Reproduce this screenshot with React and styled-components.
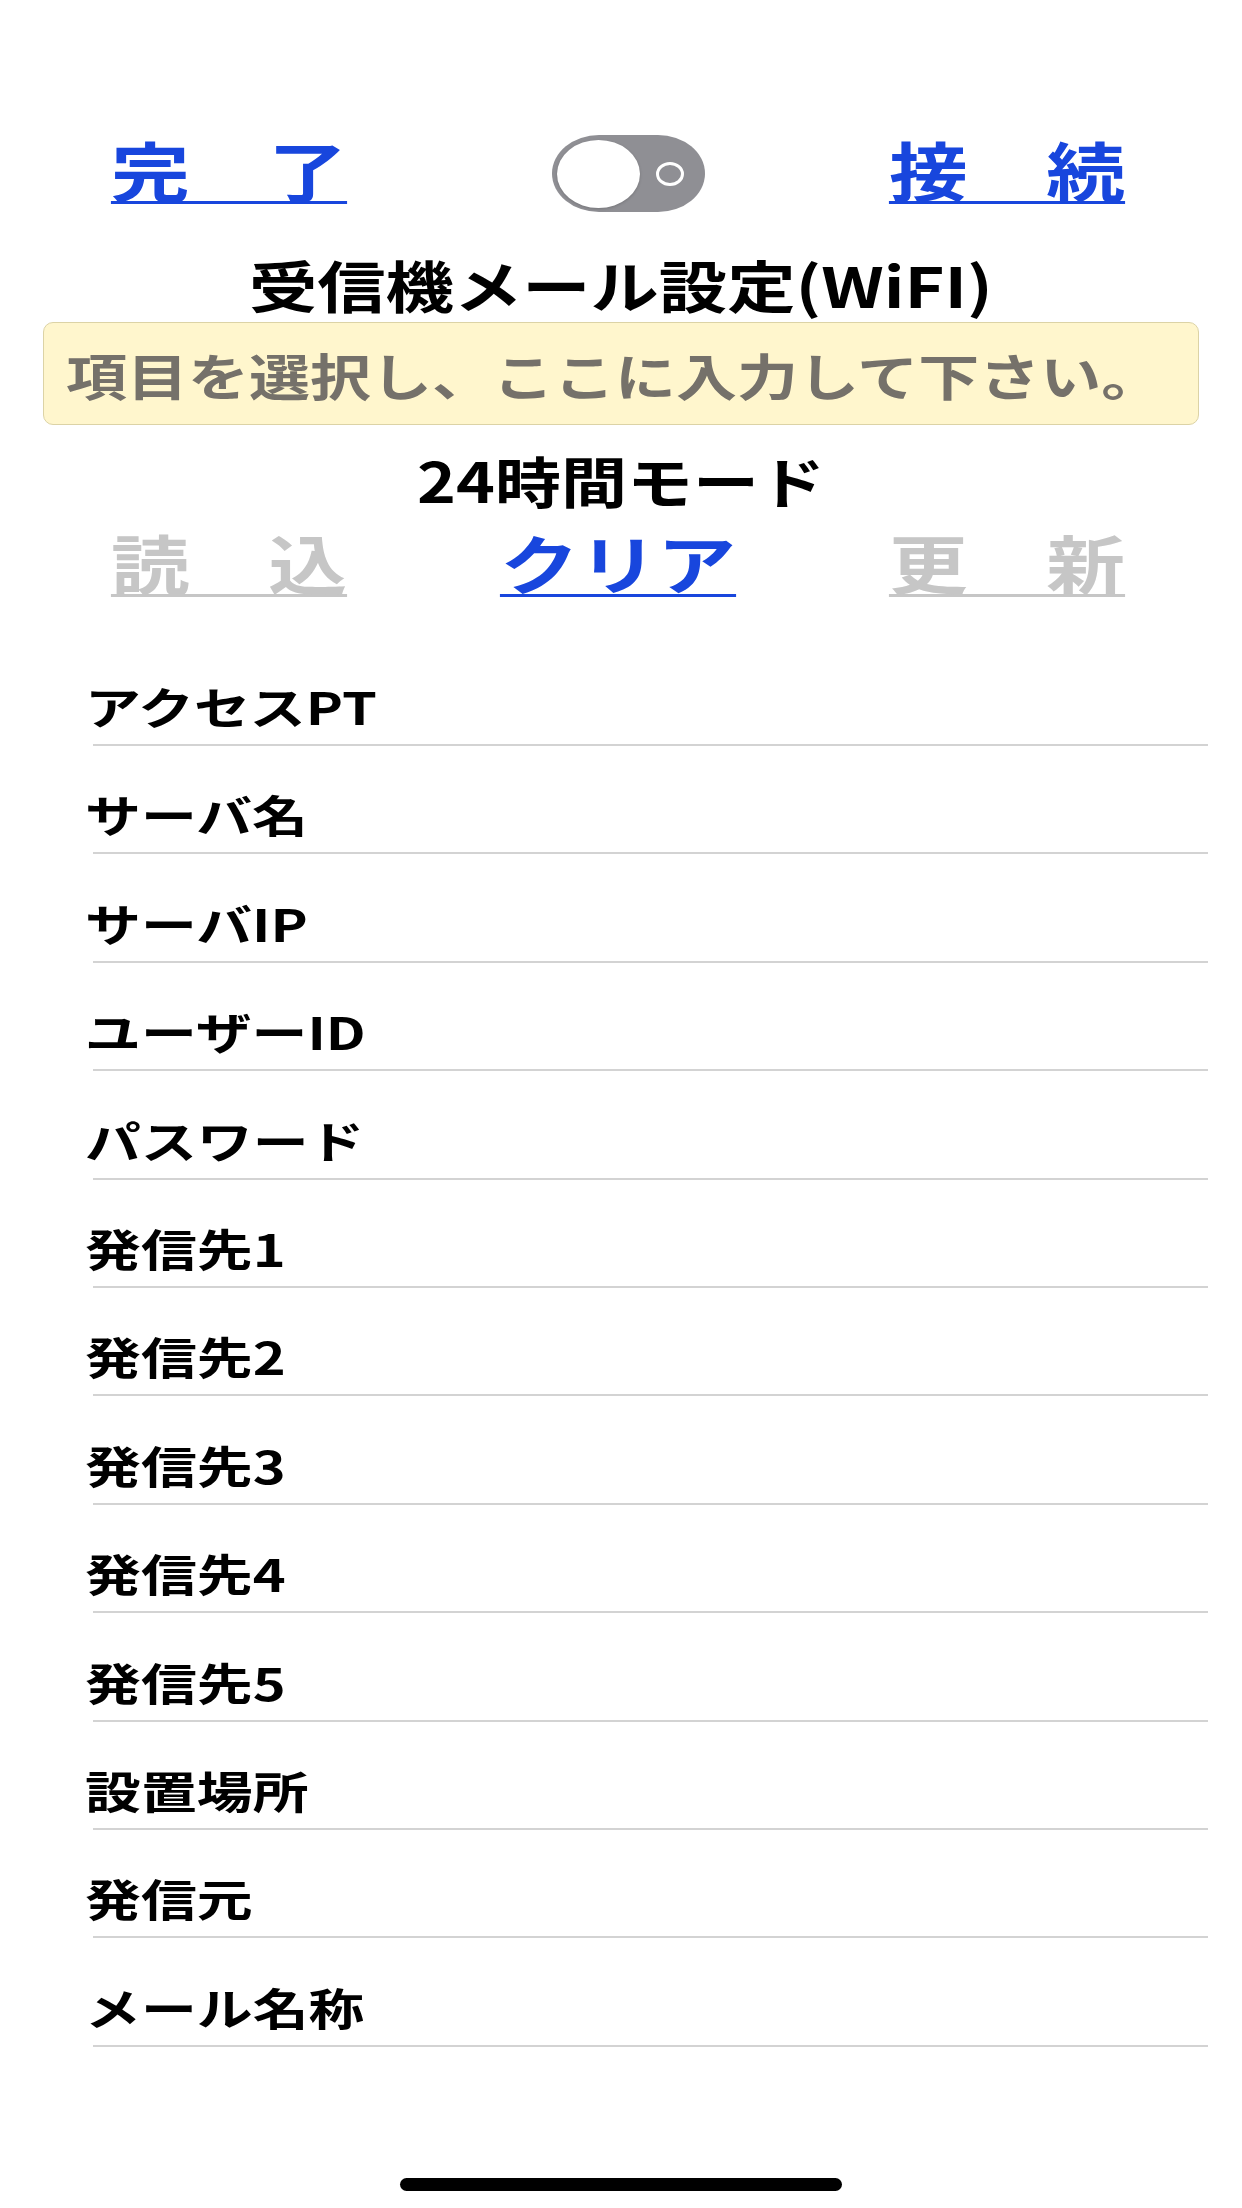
import React from "react";
import styled, { createGlobalStyle } from "styled-components";

const Global = createGlobalStyle`
  html, body { margin: 0; padding: 0; background: #ffffff; }
  body { font-family: "Noto Sans CJK JP", "Noto Sans", sans-serif; }
`;

const Page = styled.div`
  width: 1242px;
  min-height: 2208px;
  box-sizing: border-box;
  padding-top: 135px;
  display: flex;
  flex-direction: column;
  background: #ffffff;
  overflow: hidden;
  font-family: "Noto Sans CJK JP", "Noto Sans", sans-serif;
`;

const Header = styled.div`
  padding: 0 43px;
  display: flex;
  flex-direction: column;
`;

const ButtonRow = styled.div`
  display: grid;
  grid-template-columns: repeat(3, 1fr);
  align-items: center;
  justify-items: center;
  min-height: ${(p) => p.$h || 0}px;
  margin: ${(p) => p.$mt || 0}px -2px 0 -8px;
`;

const LinkButton = styled.span`
  display: inline-block;
  font-size: 64px;
  line-height: 64px;
  font-weight: 700;
  color: ${(p) => (p.$disabled ? "#c6c6c6" : "#1846dd")};
  padding-bottom: 1.5px;
  border-bottom: 3px solid currentColor;
  margin-bottom: ${(p) => p.$raise || 0}px;
  transform: scaleX(1.23);
  white-space: nowrap;
  cursor: pointer;
`;

const Track = styled.div`
  width: 153px;
  height: 77px;
  box-sizing: border-box;
  margin-left: 22px;
  border-radius: 47px / 38.5px;
  background: #8f8f94;
  display: flex;
  align-items: center;
  padding-left: 5px;
`;

const Knob = styled.div`
  width: 83px;
  height: 68px;
  border-radius: 50%;
  background: #ffffff;
  box-shadow: 0 1px 3px rgba(0, 0, 0, 0.18);
`;

const OffRing = styled.div`
  margin-left: auto;
  margin-right: 21px;
  width: 28px;
  height: 24px;
  box-sizing: border-box;
  border: 3px solid #ffffff;
  border-radius: 50%;
`;

const Title = styled.h1`
  margin: 43.5px 0 0;
  text-align: center;
  font-size: 56px;
  line-height: 56px;
  font-weight: 700;
  color: #000000;
`;

const Stretch = styled.span`
  display: inline-block;
  white-space: nowrap;
  transform: scaleX(${(p) => p.$s});
  transform-origin: ${(p) => p.$origin || "center"};
`;

const Hint = styled.div`
  margin-top: 10.5px;
  height: 103px;
  box-sizing: border-box;
  border: 1.5px solid #dcd3a6;
  border-radius: 10px;
  background: #fff6cd;
  padding: 26px 0 0 22px;
  font-size: 50px;
  line-height: 50px;
  font-weight: 700;
  color: #75716a;
`;

const Mode = styled.div`
  margin-top: 26.6px;
  text-align: center;
  font-size: 55px;
  line-height: 55px;
  font-weight: 700;
  color: #000000;
`;

const List = styled.div`
  margin-top: 40.5px;
  display: flex;
  flex-direction: column;
`;

const Row = styled.div`
  height: 108.4px;
  box-sizing: border-box;
  margin: 0 34px 0 93px;
  border-bottom: 2px solid #d3d3d3;
  display: flex;
  align-items: flex-end;
  padding-bottom: 16px;
`;

const Label = styled.span`
  display: inline-block;
  margin-left: -8px;
  font-size: 44px;
  line-height: 44px;
  font-weight: 700;
  color: #000000;
  white-space: nowrap;
  transform: scaleX(1.27);
  transform-origin: left center;
`;

const HomeIndicator = styled.div`
  align-self: center;
  margin-top: 131px;
  width: 442px;
  height: 13px;
  border-radius: 7px;
  background: #000000;
`;

const fields = [
  "アクセスPT",
  "サーバ名",
  "サーバIP",
  "ユーザーID",
  "パスワード",
  "発信先1",
  "発信先2",
  "発信先3",
  "発信先4",
  "発信先5",
  "設置場所",
  "発信元",
  "メール名称",
];

export default function App() {
  return (
    <Page>
      <Global />
      <Header>
        <ButtonRow $h={77}>
          <LinkButton $raise={7}>完　了</LinkButton>
          <Track>
            <Knob />
            <OffRing />
          </Track>
          <LinkButton $raise={7}>接　続</LinkButton>
        </ButtonRow>
        <Title>
          <Stretch $s={1.22}>受信機メール設定(WiFI)</Stretch>
        </Title>
        <Hint>
          <Stretch $s={1.22} $origin="left center">
            項目を選択し、ここに入力して下さい。
          </Stretch>
        </Hint>
        <Mode>
          <Stretch $s={1.2}>24時間モード</Stretch>
        </Mode>
        <ButtonRow $mt={22}>
          <LinkButton $disabled>読　込</LinkButton>
          <LinkButton>クリア</LinkButton>
          <LinkButton $disabled>更　新</LinkButton>
        </ButtonRow>
      </Header>
      <List>
        {fields.map((f) => (
          <Row key={f}>
            <Label>{f}</Label>
          </Row>
        ))}
      </List>
      <HomeIndicator />
    </Page>
  );
}
